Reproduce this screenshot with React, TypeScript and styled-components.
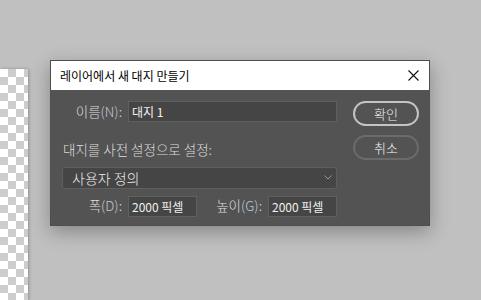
import styled, { createGlobalStyle } from 'styled-components';

const GlobalStyle = createGlobalStyle`
  html, body {
    margin: 0;
    padding: 0;
    background: #c0c0c0;
  }
  body {
    font-family: "Noto Sans CJK KR", "Noto Sans", sans-serif;
    font-weight: 300;
  }
`;

const SWorkspace = styled.div`
  display: flex;
  align-items: flex-start;
  width: 481px;
  height: 300px;
  overflow: hidden;
  background: #c0c0c0;
`;

const SArtboard = styled.div`
  flex: none;
  width: 28px;
  height: 231px;
  margin-top: 69px;
  background-color: #fff;
  background-image:
    linear-gradient(45deg, #cdcdcd 25%, transparent 25%, transparent 75%, #cdcdcd 75%),
    linear-gradient(45deg, #cdcdcd 25%, transparent 25%, transparent 75%, #cdcdcd 75%);
  background-size: 16px 16px;
  background-position: 0 0, 8px 8px;
  box-shadow: 1px 0 3px rgba(0, 0, 0, 0.25);
`;

const SDialog = styled.div`
  flex: none;
  width: 378px;
  height: 164px;
  margin: 60px 0 0 22px;
  border: 1px solid #4e4e4e;
  background: #535353;
  box-shadow: 0 6px 18px rgba(0, 0, 0, 0.3);
  display: flex;
  flex-direction: column;
`;

const STitleBar = styled.div`
  height: 29px;
  background: #fff;
  display: flex;
  align-items: center;
  justify-content: space-between;
  padding: 0 10px 0 9px;
`;

const STitle = styled.span`
  font-size: 12px;
  font-weight: 400;
  color: #000;
  line-height: 1;
`;

const SClose = styled.svg`
  width: 11px;
  height: 11px;
`;

const SBody = styled.div`
  display: flex;
  gap: 16px;
  padding: 11px 0 0 11px;
`;

const SForm = styled.div`
  width: 275px;
  display: flex;
  flex-direction: column;
`;

const SRow = styled.div`
  display: grid;
  grid-template-columns: 60px 1fr;
  column-gap: 6px;
  align-items: center;
`;

const SSizeRow = styled.div`
  display: grid;
  grid-template-columns: 60px 69px 1fr 69px;
  column-gap: 6px;
  align-items: center;
  margin-top: 7px;
`;

const SLabel = styled.label`
  font-size: 13.5px;
  color: #dcdcdc;
  text-align: right;
  white-space: nowrap;
  line-height: 1;
`;

const SKey = styled.span`
  color: #bfcad6;
`;

const SSectionLabel = styled.div`
  font-size: 13.5px;
  color: #dcdcdc;
  line-height: 1;
  margin: 21px 0 0 1px;
`;

const SInput = styled.div`
  height: 19px;
  border: 1px solid #606060;
  background: #454545;
  color: #f0f0f0;
  font-size: 12px;
  font-weight: 400;
  display: flex;
  align-items: center;
  padding: 0 3px;
  white-space: nowrap;
`;

const SSelect = styled.div`
  height: 20px;
  margin-top: 10px;
  border: 1px solid #5f5f5f;
  border-radius: 3px;
  background: #454545;
  color: #eaeaea;
  font-size: 14px;
  display: flex;
  align-items: center;
  justify-content: space-between;
  padding: 0 4px 0 9px;
`;

const SChevron = styled.svg`
  width: 8px;
  height: 5px;
`;

const SButtons = styled.div`
  display: flex;
  flex-direction: column;
  gap: 9px;
`;

const SButton = styled.button<{ $primary?: boolean }>`
  width: 66px;
  height: 25px;
  border-radius: 13px;
  border: 2px solid ${({ $primary }) => ($primary ? '#c4c4c4' : '#6b6b6b')};
  background: #535353;
  color: #f2f2f2;
  font-family: "Noto Sans CJK KR", sans-serif;
  font-weight: 300;
  font-size: 13px;
  line-height: 1;
  padding: 0;
  display: flex;
  align-items: center;
  justify-content: center;
`;

export default function App() {
  return (
    <>
      <GlobalStyle />
      <SWorkspace>
        <SArtboard />
        <SDialog>
          <STitleBar>
            <STitle>레이어에서 새 대지 만들기</STitle>
            <SClose viewBox="0 0 11 11">
              <path d="M0.5 0.5 L10.5 10.5 M10.5 0.5 L0.5 10.5" stroke="#111" strokeWidth="1.1" fill="none" />
            </SClose>
          </STitleBar>
          <SBody>
            <SForm>
              <SRow>
                <SLabel>
                  이름<SKey>(N)</SKey>:
                </SLabel>
                <SInput>대지 1</SInput>
              </SRow>
              <SSectionLabel>대지를 사전 설정으로 설정:</SSectionLabel>
              <SSelect>
                <span>사용자 정의</span>
                <SChevron viewBox="0 0 8 5">
                  <path d="M0.5 0.5 L4 4 L7.5 0.5" stroke="#9a9a9a" strokeWidth="1" fill="none" />
                </SChevron>
              </SSelect>
              <SSizeRow>
                <SLabel>
                  폭<SKey>(D)</SKey>:
                </SLabel>
                <SInput>2000 픽셀</SInput>
                <SLabel>
                  높이<SKey>(G)</SKey>:
                </SLabel>
                <SInput>2000 픽셀</SInput>
              </SSizeRow>
            </SForm>
            <SButtons>
              <SButton $primary>확인</SButton>
              <SButton>취소</SButton>
            </SButtons>
          </SBody>
        </SDialog>
      </SWorkspace>
    </>
  );
}
